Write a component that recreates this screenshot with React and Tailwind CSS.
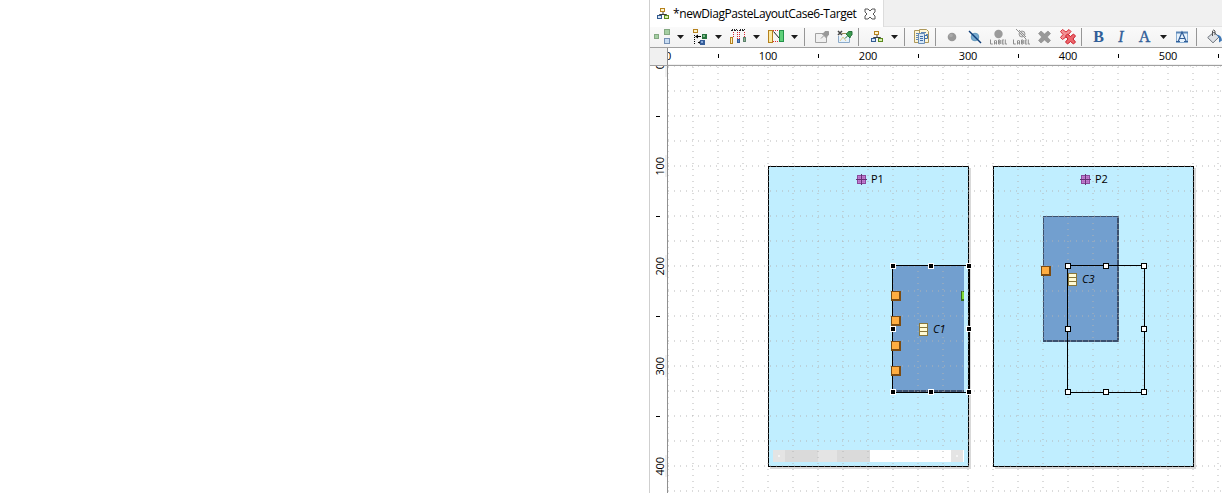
import React from "react";

const Arrow = () => (
  <svg width="7" height="20" viewBox="0 0 7 20" className="block shrink-0">
    <path d="M0 8h7L3.5 12z" fill="#1c1c1c" />
  </svg>
);

const Sep = () => <div className="h-[18px] w-px shrink-0 bg-[#969696]" />;

/* Icons share one 20px tall row; y runs from the top of the toolbar. */
const Icon = ({ w, children }) => (
  <svg width={w} height="20" viewBox={`0 0 ${w} 20`} className="block shrink-0">
    {children}
  </svg>
);

const Tree = () => (
  <>
    <path d="M6 7.5v3M2.5 13v-2.5h7V13" fill="none" stroke="#3c3c3c" />
    <rect x="3.5" y="4.5" width="4" height="3" fill="#fff6d0" stroke="#b5811d" />
    <rect x=".5" y="11.5" width="4" height="3" fill="#d7e6f6" stroke="#315b91" />
    <rect x="7.5" y="11.5" width="4" height="3" fill="#d9efb6" stroke="#5a8a1c" />
  </>
);

const Caption = () => (
  <path
    transform="translate(0 12.5)"
    d="M.5 0v4.5H2.8M4.500 5V1.500L5.500 .5 6.500 1.500V5M4.500 3.500H6.500M8.500 .5v4h1.500l.5-1-.5-1H8.500h1.500l.5-1-.5-1H8.500M14 .5H12.200v4h2M12.200 2.500h1.500M15.300 0v4.500H17"
    fill="none"
    stroke="#8c8c8c"
  />
);

const Toolbar = () => (
  <div className="flex h-[20px] shrink-0 items-center overflow-hidden bg-gradient-to-b from-[#fafafa] to-[#f2f2f2]">
    <div className="w-[4px] shrink-0" />
    <Icon w={17}>
      <rect x=".5" y="7.5" width="4" height="4" fill="#a5cfa3" stroke="#84a982" />
      <rect x="10.5" y="2.5" width="5" height="5" fill="#a5cfa3" stroke="#84a982" />
      <rect x="10.5" y="11.5" width="5" height="5" fill="#c8dcf2" stroke="#7590b5" />
    </Icon>
    <div className="w-[6px] shrink-0" />
    <Arrow />
    <div className="w-[8px] shrink-0" />
    <Icon w={15}>
      <path d="M2.500 8v9M4 9.500h6M6 15.500h4" stroke="#000" strokeDasharray="1 1" fill="none" />
      <path d="M3 9.500l3-2v4zM6 15.500l3-2v4z" />
      <path d="M5 9.500h4" stroke="#000" />
      <rect x="1.500" y="2.500" width="4" height="3" fill="#fff4c8" stroke="#b5811d" />
      <rect x="10" y="7" width="5" height="5" fill="#28733e" />
      <rect x="11" y="8" width="2" height="2" fill="#7cc08b" />
      <rect x="8" y="13" width="5" height="5" fill="#365e9a" />
      <rect x="9" y="14" width="2" height="2" fill="#86a8d8" />
    </Icon>
    <div className="w-[8px] shrink-0" />
    <Arrow />
    <div className="w-[7px] shrink-0" />
    <Icon w={17}>
      <path d="M3 2.500h5M11 2.500h5" stroke="#222" strokeDasharray="1 1" />
      <path d="M2 3.500h7M10 3.500h6" stroke="#222" strokeDasharray="2 1" />
      <path d="M4.500 5v5M8.500 5v7M10.500 5v7M15.500 5v5" stroke="#d82c34" strokeDasharray="1 1" />
      <rect x="1.500" y="10.500" width="2" height="6" fill="#fff0bd" stroke="#b5811d" />
      <rect x="8.500" y="12.500" width="2" height="3" fill="#638dc5" stroke="#315c9c" />
      <rect x="14.500" y="10.500" width="2" height="4" fill="#90b19a" stroke="#5c826a" />
    </Icon>
    <div className="w-[7px] shrink-0" />
    <Arrow />
    <div className="w-[8px] shrink-0" />
    <Icon w={16}>
      <path d="M5 3.500h6M5 14.500h6" stroke="#d82c34" strokeDasharray="1 1" />
      <path d="M5.500 4.500l6 7" stroke="#222" fill="none" />
      <rect x=".5" y="3.500" width="4" height="12" fill="#fbeaa5" stroke="#b5811d" />
      <rect x="11.500" y="3.500" width="4" height="11" fill="#5fd17a" stroke="#23924a" />
    </Icon>
    <div className="w-[7px] shrink-0" />
    <Arrow />
    <div className="w-[6px] shrink-0" />
    <Sep />
    <div className="w-[10px] shrink-0" />
    <Icon w={14}>
      <path d="M8 6.500H.5v9h11V11" fill="#f0f0f0" stroke="#a2a2a2" />
      <path d="M6 11.500l3-3" stroke="#999" />
      <path d="M7.500 7l4 4 .5-2 1.500-1V4.500H10L9 6z" fill="#999" stroke="#999" />
    </Icon>
    <div className="w-[8px] shrink-0" />
    <Icon w={16}>
      <path d="M1.500 9v6.500h11V10" fill="#e7f3fd" stroke="#8caac8" />
      <path d="M3 14l3-4 3 4" fill="none" stroke="#e3c98b" />
      <path d="M1 4l4 4M5 4L1 8" stroke="#454545" strokeWidth="1.500" />
      <path d="M5 6.500h4" stroke="#9b8a5a" />
      <path d="M8 11.500l3-3" stroke="#25733a" />
      <path d="M9 7l4 4 .5-2 1.500-1V4.500h-3.500L10.500 6z" fill="#3c9c50" stroke="#25733a" />
    </Icon>
    <div className="w-[5px] shrink-0" />
    <Sep />
    <div className="w-[12px] shrink-0" />
    <Icon w={13}>
      <Tree />
    </Icon>
    <div className="w-[7px] shrink-0" />
    <Arrow />
    <div className="w-[6px] shrink-0" />
    <Sep />
    <div className="w-[9px] shrink-0" />
    <Icon w={16}>
      <path d="M.5 3.500h7v12h-7z" fill="#fff6d6" stroke="#ad985b" />
      <path d="M2 6.500h4M2 8.500h3M2 10.500h3M2 12.500h3" stroke="#5f87b6" />
      <path d="M5.500 2.500h7l2 2v11h-9z" fill="#fff6d6" stroke="#ad985b" />
      <path d="M7 5.500h5M12 7.500h2" stroke="#5f87b6" />
      <path d="M4.500 6.500h6v10h-6z" fill="#d8e8f7" stroke="#6c8fb6" />
      <path d="M6 9.500h3M6 11.500h3M6 13.500h3M10.500 14V8.500h3v3h-3" fill="none" stroke="#406fa8" />
    </Icon>
    <div className="w-[5px] shrink-0" />
    <Sep />
    <div className="w-[11px] shrink-0" />
    <Icon w={10}>
      <circle cx="5" cy="10" r="4.300" fill="#989898" />
      <circle cx="4" cy="8.500" r="1.800" fill="#aaa" />
    </Icon>
    <div className="w-[11px] shrink-0" />
    <Icon w={14}>
      <circle cx="7" cy="10" r="3.800" fill="#78abd0" stroke="#6198bd" />
      <path d="M1 4l12 12" stroke="#0d3c78" strokeWidth="1.400" />
    </Icon>
    <div className="w-[8px] shrink-0" />
    <Icon w={17}>
      <circle cx="8.500" cy="7" r="4.200" fill="#9b9b9b" />
      <Caption />
    </Icon>
    <div className="w-[6px] shrink-0" />
    <Icon w={17}>
      <circle cx="9" cy="7" r="3" fill="#ddd" stroke="#999" />
      <path d="M3 2l10 10M6 3l7 7" stroke="#929292" />
      <Caption />
    </Icon>
    <div className="w-[8px] shrink-0" />
    <Icon w={13}>
      <path d="M.5 6.500L3 4l3.500 3L10 4l2.500 2.500L9.300 10l3.200 3.500L10 16l-3.500-3L3 16 .5 13.500 3.700 10z" fill="#989898" stroke="#888" strokeWidth=".6" />
    </Icon>
    <div className="w-[9px] shrink-0" />
    <Icon w={16}>
      <path d="M.5 4.500l2-2L6 5l3-2.500 2 2L8.500 7.500l2.500 3-2 2L6 10l-3.500 2.500-2-2L3 7.500z" fill="#f29093" stroke="#d62d37" />
      <path d="M5.500 9l2-2 3 2.500 3-2.500 2 2L13 12l2.500 3-2 2-3-2.500-3 2.500-2-2L8 12z" fill="#ec666c" stroke="#cb1f2c" />
    </Icon>
    <div className="w-[5px] shrink-0" />
    <Sep />
    <div className="flex w-[33px] shrink-0 justify-center font-['Liberation_Serif',serif] text-[16px] font-bold leading-[20px] text-[#315e98]">B</div>
    <div className="flex w-[12px] shrink-0 justify-center font-['Liberation_Serif',serif] text-[16px] italic leading-[20px] text-[#315e98]">
      <span className="[-webkit-text-stroke:0.3px_#315e98]">I</span>
    </div>
    <div className="flex w-[33px] shrink-0 justify-center pl-[2px] font-['Liberation_Serif',serif] text-[16px] leading-[20px] text-[#315e98]">
      <span className="[-webkit-text-stroke:0.4px_#315e98]">A</span>
    </div>
    <Arrow />
    <div className="w-[9px] shrink-0" />
    <Icon w={13}>
      <rect x=".5" y="5.500" width="11" height="10" fill="#e8f3fd" stroke="#8aaed2" />
      <path d="M0 5.500h12" stroke="#5d88b8" strokeWidth="2" />
      <path d="M2 15L6 5l4.500 10M3.500 11.500h5M0 14.500h4M8 14.500h4" fill="none" stroke="#315e98" strokeWidth="1.200" />
    </Icon>
    <div className="w-[7px] shrink-0" />
    <Sep />
    <div className="w-[10px] shrink-0" />
    <Icon w={15}>
      <path d="M.7 10.500L7 5l5 5-6 5.800z" fill="#dfe2e6" stroke="#6b727b" />
      <path d="M5.500 9V4q1.200-2 2.500 0v4" fill="none" stroke="#555" />
      <path d="M9 7.500q5.500 0 6 6l-3 2v-5z" fill="#3f78b5" />
    </Icon>
  </div>
);

const Ruler = () => (
  <div className="flex h-[19px] shrink-0 border-y border-[#a0a0a0] bg-white">
    <div className="w-[17px] shrink-0 bg-[#f0f0f0]" />
    <div className="w-px shrink-0 bg-[#909090]" />
    <div className="flex min-w-0 flex-1 overflow-hidden border-b border-[#f0f0f0] text-[11px] leading-[16px] text-black">
      <div className="-ml-[25px] flex shrink-0">
        {[0, 100, 200, 300, 400, 500].map((n) => (
          <div key={n} className="flex w-[100px] shrink-0 items-center">
            <span className="w-[50px] text-center tracking-[-0.1px]">{n}</span>
            <span className="ml-[25px] h-[4px] w-px bg-black" />
          </div>
        ))}
      </div>
    </div>
  </div>
);

const SideRuler = () => (
  <div className="flex w-[18px] shrink-0 flex-col overflow-hidden border-r border-[#909090] bg-white text-[11px] leading-[14px] text-black">
    <div className="-mt-[25px] flex shrink-0 flex-col">
      {[0, 100, 200, 300, 400].map((n) => (
        <div key={n} className="flex h-[100px] shrink-0 flex-col">
          <div className="flex h-[50px] items-center justify-end">
            <div className="flex h-[22px] w-[13px] items-center justify-center border-r-2 border-[#f0f0f0]">
              <span className="shrink-0 rotate-180 tracking-[-0.1px] [writing-mode:vertical-rl]">{n}</span>
            </div>
          </div>
          <span className="ml-[6px] mt-[25px] h-px w-[4px] bg-black" />
        </div>
      ))}
    </div>
  </div>
);

const Port = ({ className }) => (
  <div className={`absolute h-[10px] w-[10px] border-b-2 border-l border-r-2 border-t border-[#7c4c12] bg-[#ffae42] ${className}`} />
);

const PartIcon = () => (
  <svg width="11" height="11" viewBox="0 0 11 11" className="block shrink-0">
    <rect x="1.500" y="1.500" width="8" height="8" fill="#c680d4" stroke="#8a4a9c" />
    <path d="M3.500 2v7M7.500 2v7M2 3.500h7M2 7.500h7" stroke="#ad68bd" strokeWidth=".6" />
    <path d="M5.500 0v11M0 5.500h11" stroke="#653276" />
  </svg>
);

const ClassIcon = () => (
  <svg width="9" height="13" viewBox="0 0 9 13" className="block shrink-0">
    <rect x=".5" y=".5" width="8" height="12" fill="#fffbd6" stroke="#88773c" />
    <path d="M1 4.500h7M1 8.500h7" stroke="#88773c" />
  </svg>
);

const handlesAt = (xs) => [
  [xs[0], 200], [xs[1], 200], [xs[2], 200],
  [xs[0], 263], [xs[2], 263],
  [xs[0], 326], [xs[1], 326], [xs[2], 326],
];

const Handles = ({ xs, className }) =>
  handlesAt(xs).map(([x, y]) => (
    <div key={`${x}-${y}`} className={`absolute h-[6px] w-[6px] border ${className}`} style={{ left: x - 3, top: y - 3 }} />
  ));

const steps = Array.from({ length: 23 }, (_, i) => i * 25);

const Grid = () => (
  <svg width="554" height="427" viewBox="0 0 554 427" className="pointer-events-none absolute left-0 top-0">
    <g stroke="#b4b4b4" strokeOpacity=".48" strokeWidth="2" shapeRendering="crispEdges">
      {steps.map((x) => (
        <path key={`v${x}`} d={`M${x} 1V427`} strokeDasharray="1 5" />
      ))}
      {steps.slice(0, 18).map((y) => (
        <path key={`h${y}`} d={`M0 ${y}H554`} strokeDasharray="1 5" />
      ))}
    </g>
  </svg>
);

const Box = ({ name, className, labelClass }) => (
  <div className={`absolute top-[100px] h-[301px] w-[201px] border border-black bg-[#c0eeff] shadow-[2px_2px_0_#d9d9d9] ${className}`}>
    <div className={`flex items-center gap-[4px] pt-[6px] text-[11px] leading-[12px] ${labelClass}`}>
      <PartIcon />
      <span className="tracking-[-0.2px]">{name}</span>
    </div>
  </div>
);

const Canvas = () => (
  <div className="relative min-w-0 flex-1 overflow-hidden bg-white font-['Open_Sans',sans-serif] text-black">
    <Box name="P1" className="left-[100px]" labelClass="pl-[87px]" />
    <Box name="P2" className="left-[325px]" labelClass="pl-[86px]" />

    <div className="absolute left-[105px] top-[384px] flex h-[12px] w-[191px] bg-white">
      <div className="flex w-[12px] items-center justify-center bg-[#e4e4e4]"><i className="h-[2px] w-[2px] bg-[#f4f4f4]" /></div>
      <div className="w-[33px] bg-[#dadada]" />
      <div className="w-[19px] bg-[#e4e4e4]" />
      <div className="w-[33px] bg-[#dadada]" />
      <div className="w-[81px]" />
      <div className="flex w-[12px] items-center justify-center bg-[#e4e4e4]"><i className="h-[2px] w-[2px] bg-[#f4f4f4]" /></div>
    </div>

    <div className="absolute left-[225px] top-[200px] h-[126px] w-[71px] border-b-2 border-[#3b506e] bg-[#729fcf]" />
    <div className="absolute left-[375px] top-[150px] h-[126px] w-[76px] border-b-2 border-l border-r-2 border-t border-[#3b506e] bg-[#729fcf]" />
    <div className="absolute left-[293px] top-[225px] h-[10px] w-[3px] border-b-2 border-l border-t border-[#376f18] bg-[#7fdc38]" />

    <Grid />

    <div className="absolute left-[251px] top-[257px] flex items-start gap-[5px] text-[11px] italic leading-[12px]">
      <ClassIcon />
      <span>C1</span>
    </div>
    <div className="absolute left-[400px] top-[207px] flex items-start gap-[5px] text-[11px] italic leading-[12px]">
      <ClassIcon />
      <span>C3</span>
    </div>

    <div className="absolute left-[224px] top-[199px] h-[128px] w-[78px] border border-black" />
    <Port className="left-[223px] top-[225px]" />
    <Port className="left-[223px] top-[250px]" />
    <Port className="left-[223px] top-[275px]" />
    <Port className="left-[223px] top-[300px]" />
    <Port className="left-[373px] top-[200px]" />
    <Handles xs={[225, 263, 301]} className="border-white bg-black" />

    <div className="absolute left-[399px] top-[199px] h-[128px] w-[78px] border border-black" />
    <Handles xs={[400, 438, 476]} className="border-black bg-white" />
  </div>
);

export default function App() {
  return (
    <div className="flex h-[493px] w-[1222px] overflow-hidden bg-white font-['Open_Sans',sans-serif]">
      <div className="w-[649px] shrink-0" />
      <main className="flex min-w-0 flex-1 flex-col border-l border-[#cfcfcf]">
        <div className="flex h-[27px] shrink-0">
          <div className="flex w-[234px] shrink-0 items-center border-r border-[#dcdcdc] bg-white pl-[7px]">
            <svg width="12" height="20" viewBox="0 0 12 20" className="mt-[1px] block shrink-0">
              <Tree />
            </svg>
            <span className="ml-[4px] w-[184px] whitespace-nowrap text-[12px] leading-[16px] tracking-[-0.42px] text-black">
              *newDiagPasteLayoutCase6-Target
            </span>
            <svg width="12" height="12" viewBox="0 0 12 12" className="ml-[7px] block shrink-0">
              <path d="M1 1h3l2 2 2-2h3v3L9 6l2 2v3H8L6 9l-2 2H1V8l2-2-2-2z" fill="#fff" stroke="#555" />
            </svg>
          </div>
          <div className="flex-1 border-b border-[#e2e2e2] bg-[#f0f0f0]" />
        </div>
        <Toolbar />
        <Ruler />
        <div className="flex min-h-0 flex-1">
          <SideRuler />
          <Canvas />
        </div>
      </main>
    </div>
  );
}
